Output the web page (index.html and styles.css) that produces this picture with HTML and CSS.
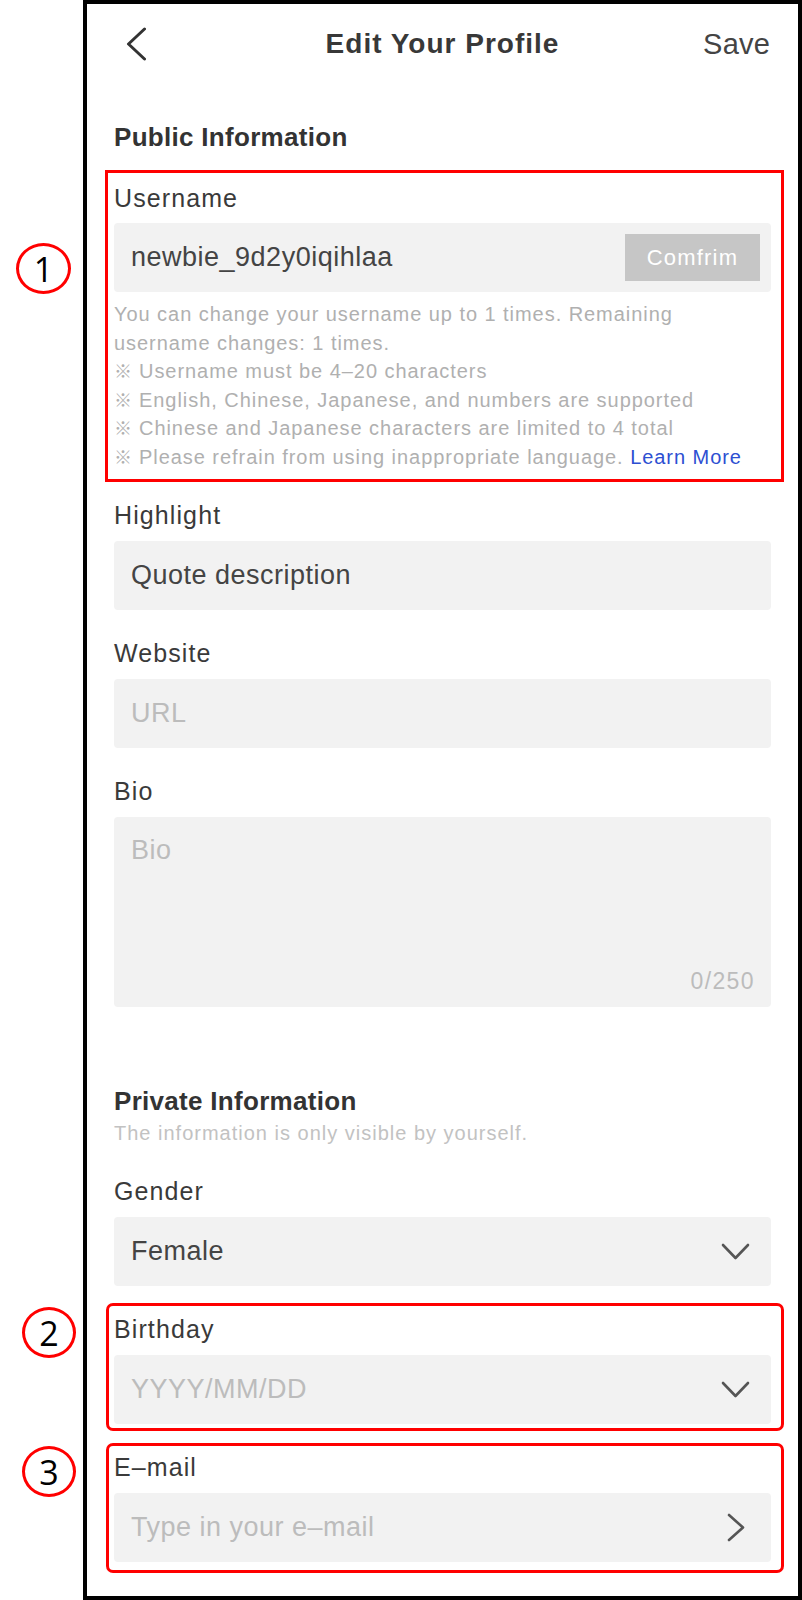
FILE: index.html
```html
<!DOCTYPE html>
<html lang="en">
<head>
<meta charset="utf-8">
<title>Edit Your Profile</title>
<link rel="stylesheet" href="styles.css">
</head>
<body>
<div class="page">
  <div class="gutter"></div>
  <div class="phone">
    <header class="topbar">
      <svg class="back" width="20" height="34" viewBox="0 0 20 34" aria-hidden="true"><polyline points="18.5,2 2.5,17 18.5,32" fill="none" stroke="#333" stroke-width="3" stroke-linecap="round" stroke-linejoin="round"/></svg>
      <h1 class="title">Edit Your Profile</h1>
      <span class="save">Save</span>
    </header>

    <main class="content">
      <h2 class="section-title">Public Information</h2>

      <div class="field annotated a1">
        <span class="marker m1">1</span>
        <div class="label">Username</div>
        <div class="input">
          <span class="value">newbie_9d2y0iqihlaa</span>
          <span class="btn">Comfrim</span>
        </div>
        <div class="help">
          <p>You can change your username up to 1 times. Remaining<br>username changes: 1 times.</p>
          <p><span class="mark">※</span> Username must be 4–20 characters</p>
          <p><span class="mark">※</span> English, Chinese, Japanese, and numbers are supported</p>
          <p><span class="mark">※</span> Chinese and Japanese characters are limited to 4 total</p>
          <p><span class="mark">※</span> Please refrain from using inappropriate language. <span class="link">Learn More</span></p>
        </div>
      </div>

      <div class="field after-help">
        <div class="label">Highlight</div>
        <div class="input"><span class="value">Quote description</span></div>
      </div>

      <div class="field">
        <div class="label">Website</div>
        <div class="input"><span class="placeholder">URL</span></div>
      </div>

      <div class="field">
        <div class="label">Bio</div>
        <div class="textarea">
          <span class="placeholder">Bio</span>
          <span class="counter">0/250</span>
        </div>
      </div>

      <h2 class="section-title private">Private Information</h2>
      <p class="subtitle">The information is only visible by yourself.</p>

      <div class="field gender">
        <div class="label">Gender</div>
        <div class="input select">
          <span class="value">Female</span>
          <svg class="chev-down" width="29" height="18" viewBox="0 0 29 18" aria-hidden="true"><polyline points="2,2 14.5,15 27,2" fill="none" stroke="#555" stroke-width="2.6" stroke-linecap="round" stroke-linejoin="round"/></svg>
        </div>
      </div>

      <div class="field annotated a2">
        <span class="marker m2">2</span>
        <div class="label">Birthday</div>
        <div class="input select">
          <span class="placeholder">YYYY/MM/DD</span>
          <svg class="chev-down" width="29" height="18" viewBox="0 0 29 18" aria-hidden="true"><polyline points="2,2 14.5,15 27,2" fill="none" stroke="#555" stroke-width="2.6" stroke-linecap="round" stroke-linejoin="round"/></svg>
        </div>
      </div>

      <div class="field annotated a3">
        <span class="marker m3">3</span>
        <div class="label">E–mail</div>
        <div class="input link-row">
          <span class="placeholder">Type in your e–mail</span>
          <svg class="chev-right" width="19" height="29" viewBox="0 0 19 29" aria-hidden="true"><polyline points="2,2 16,14.5 2,27" fill="none" stroke="#555" stroke-width="2.6" stroke-linecap="round" stroke-linejoin="round"/></svg>
        </div>
      </div>
    </main>
  </div>
</div>
</body>
</html>
```

FILE: styles.css
```css
* { box-sizing: border-box; }

html, body {
  margin: 0;
  padding: 0;
  background: #fff;
}

body {
  font-family: "Liberation Sans", Arial, "Noto Sans CJK JP", sans-serif;
  color: #333;
}

.page {
  display: flex;
  width: 802px;
  height: 1600px;
}

.gutter {
  width: 83px;
  flex: none;
}

.phone {
  width: 719px;
  height: 1600px;
  border: 4px solid #000;
  background: #fff;
}

/* Header */
.topbar {
  height: 80px;
  display: grid;
  grid-template-columns: 1fr auto 1fr;
  align-items: center;
  padding: 0 28px;
}

.back {
  margin-left: 11px;
  display: block;
}

.title {
  margin: 0;
  font-size: 28px;
  font-weight: bold;
  letter-spacing: 1px;
  color: #383838;
}

.save {
  justify-self: end;
  font-size: 29px;
  color: #444;
  letter-spacing: 0.2px;
}

/* Content */
.content {
  padding: 0 27px;
}

.section-title {
  margin: 37px 0 0;
  font-size: 26px;
  line-height: 32px;
  font-weight: bold;
  letter-spacing: 0.3px;
  color: #333;
}

.section-title.private {
  margin-top: 78px;
}

.subtitle {
  margin: 3px 0 0;
  font-size: 20px;
  line-height: 26px;
  letter-spacing: 1px;
  color: #c2c2c2;
}

.field {
  position: relative;
  margin-top: 28px;
}

.field.a1 { margin-top: 30px; }
.field.after-help { margin-top: 29px; }
.field.gender { margin-top: 30px; }

.label {
  font-size: 25px;
  line-height: 30px;
  letter-spacing: 1.1px;
  color: #3a3a3a;
  margin-bottom: 11px;
}

.a1 .label { margin-bottom: 10px; }

.input {
  height: 69px;
  background: #f2f2f2;
  border-radius: 4px;
  display: flex;
  align-items: center;
  justify-content: space-between;
  padding: 0 11px 0 17px;
}

.input.select { padding-right: 21px; }
.input.link-row { padding-right: 25px; }

.value,
.placeholder {
  font-size: 27px;
  letter-spacing: 0.5px;
}

.value { color: #444; }
.placeholder { color: #bcbcbc; }

.btn {
  width: 135px;
  height: 47px;
  background: #c6c6c6;
  color: #fff;
  font-size: 22px;
  letter-spacing: 1.2px;
  display: flex;
  align-items: center;
  justify-content: center;
}

.chev-down, .chev-right { display: block; }

.help {
  margin-top: 8px;
  font-size: 20px;
  line-height: 28.5px;
  letter-spacing: 0.95px;
  color: #b0b0b0;
}

.help p {
  margin: 0;
  height: 28.5px;
}

.help p:first-child { height: 57px; }

.mark {
  font-family: "Noto Sans CJK JP", "DejaVu Sans", sans-serif;
  font-size: 18px;
  line-height: 1;
  letter-spacing: 0.5px;
}

.link { color: #2d4fd2; }

.textarea {
  height: 190px;
  background: #f2f2f2;
  border-radius: 4px;
  padding: 16px 16px 11px 17px;
  display: flex;
  flex-direction: column;
  justify-content: space-between;
}

.textarea .placeholder {
  line-height: 34px;
}

.counter {
  align-self: flex-end;
  font-size: 23px;
  line-height: 30px;
  letter-spacing: 1.4px;
  color: #bcbcbc;
}

/* Annotation overlays */
.annotated::after {
  content: "";
  position: absolute;
  border: 3px solid #f00;
  pointer-events: none;
}

.a1::after { top: -13px; bottom: -11px; left: -9px; right: -13px; }
.a2::after { top: -11px; bottom: -7px; left: -8px; right: -13px; border-radius: 7px; }
.a3::after { top: -9px; bottom: -11px; left: -8px; right: -13px; border-radius: 7px; }

.marker {
  position: absolute;
  width: 54px;
  height: 51px;
  border: 3px solid #f00;
  border-radius: 50%;
  display: flex;
  align-items: center;
  justify-content: center;
  font-family: "Open Sans", "Liberation Sans", sans-serif;
  font-size: 34px;
  line-height: 1;
  color: #000;
  background: #fff;
}

.m1 { left: -98px; top: 60px; width: 55px; }
.m2 { left: -92px; top: -7px; }
.m3 { left: -92px; top: -6px; }
```
